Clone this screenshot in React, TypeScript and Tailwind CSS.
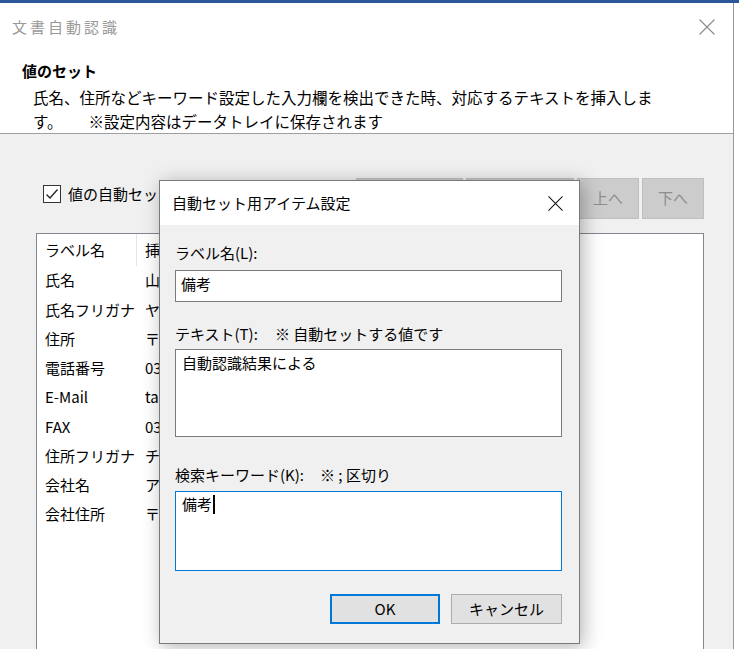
const rows = [
  ["氏名", "山田 太郎"],
  ["氏名フリガナ", "ヤマダ タロウ"],
  ["住所", "〒100-0001 東京都千代田区"],
  ["電話番号", "03-1234-5678"],
  ["E-Mail", "taro@example.com"],
  ["FAX", "03-1234-5679"],
  ["住所フリガナ", "チヨダク チヨダ"],
  ["会社名", "アイウ株式会社"],
  ["会社住所", "〒100-0005 東京都千代田区"],
];

const CloseX = ({ size, color }: { size: number; color: string }) => (
  <svg width={size} height={size} viewBox="0 0 16 16" fill="none">
    <path d="M0.5 0.5 L15.5 15.5 M15.5 0.5 L0.5 15.5" stroke={color} strokeWidth="1.1" />
  </svg>
);

const App = () => {
  return (
    <div className="relative h-[649px] w-[739px] overflow-hidden bg-white font-['Noto_Sans_CJK_JP',sans-serif] text-[15px] text-black">
      <div className="h-[3px] bg-[#2b579a]" />

      {/* main window */}
      <div className="flex h-[646px] w-[734px] flex-col border-r border-[#999999]">
        <div className="bg-white">
          <div className="flex h-[48px] items-center justify-between pl-3 pr-[18px]">
            <span className="text-[15px] tracking-[3px] text-[#999999]">文書自動認識</span>
            <CloseX size={16} color="#8a8a8a" />
          </div>
          <div className="pl-[22px] pt-[9px]">
            <div className="text-[15px] font-bold leading-[22px]">値のセット</div>
            <div className="mt-[3px] whitespace-nowrap pl-[11px] text-[15.5px] leading-6">
              氏名、住所などキーワード設定した入力欄を検出できた時、対応するテキストを挿入しま
              <br />
              す。<span className="ml-[26px]">※設定内容はデータトレイに保存されます</span>
            </div>
          </div>
        </div>

        <div className="flex-1 border-t border-[#a0a0a0] bg-[#f0f0f0] pl-9 pr-[29px] pt-[44px]">
          <div className="flex items-start justify-between">
            <div className="ml-[7px] mt-[6px] flex items-center gap-[7px]">
              <div className="flex h-[18px] w-[18px] items-center justify-center border border-[#333333] bg-white">
                <svg width="14" height="14" viewBox="0 0 14 14" fill="none">
                  <path d="M1.5 7.5 L5 11 L12.5 2.5" stroke="#222" strokeWidth="1.3" />
                </svg>
              </div>
              <span className="leading-5">値の自動セットを行う</span>
            </div>
            <div className="flex gap-[3px] text-[#8d8d8d]">
              <div className="flex h-[41px] w-[107px] items-center justify-center border border-[#bfbfbf] bg-[#cccccc]">追加</div>
              <div className="flex h-[41px] w-[108px] items-center justify-center border border-[#bfbfbf] bg-[#cccccc]">削除</div>
              <div className="flex h-[41px] w-[62px] items-center justify-center border border-[#bfbfbf] bg-[#cccccc]">上へ</div>
              <div className="flex h-[41px] w-[62px] items-center justify-center border border-[#bfbfbf] bg-[#cccccc]">下へ</div>
            </div>
          </div>

          <div className="mt-[14px] h-[500px] border border-[#828790] bg-white">
            <div className="flex h-[32px] items-center">
              <div className="flex h-full w-[100px] items-center border-r border-[#e5e5e5] pl-2">ラベル名</div>
              <div className="pl-2">挿入テキスト</div>
            </div>
            {rows.map(([label, value]) => (
              <div key={label} className="flex h-[29.25px] items-center whitespace-nowrap">
                <div className="w-[100px] pl-2">{label}</div>
                <div className="pl-2">{value}</div>
              </div>
            ))}
          </div>
        </div>
      </div>

      {/* modal dialog */}
      <div className="absolute left-[159px] top-[180px] flex h-[464px] w-[421px] flex-col border border-[#7a7a7a] bg-[#f0f0f0] shadow-[3px_3px_18px_rgba(0,0,0,0.3)]">
        <div className="flex h-[44px] items-center justify-between bg-white pl-3 pr-4">
          <span>自動セット用アイテム設定</span>
          <CloseX size={15} color="#111111" />
        </div>
        <div className="px-[15px] pt-[18px]">
          <div className="leading-5">ラベル名(L):</div>
          <div className="mt-[7px] flex h-[32px] w-[387px] items-center border border-[#7a7a7a] bg-white pb-[4px] pl-[5px]">
            備考
          </div>

          <div className="mt-[22px] flex leading-5">
            <span className="w-[100px]">テキスト(T):</span>
            <span>※ 自動セットする値です</span>
          </div>
          <div className="mt-[5px] h-[88px] w-[387px] border border-[#7a7a7a] bg-white pl-[6px] pt-[3px] leading-5">
            自動認識結果による
          </div>

          <div className="mt-[28px] flex leading-5">
            <span className="w-[145px]">検索キーワード(K):</span>
            <span>※ ; 区切り</span>
          </div>
          <div className="mt-[6px] flex h-[80px] w-[387px] items-start border border-[#0078d7] bg-white pl-[6px] pt-[2px] leading-5">
            <span>備考</span>
            <span className="ml-[1px] mt-[1px] inline-block h-[19px] w-[2px] bg-black" />
          </div>

          <div className="mt-[23px] flex justify-end gap-[11px] pr-[2px]">
            <div className="flex h-[30px] w-[110px] items-center justify-center border-2 border-[#0078d7] bg-[#e1e1e1]">OK</div>
            <div className="flex h-[30px] w-[111px] items-center justify-center border border-[#adadad] bg-[#e1e1e1]">キャンセル</div>
          </div>
        </div>
      </div>
    </div>
  );
};

export default App;
